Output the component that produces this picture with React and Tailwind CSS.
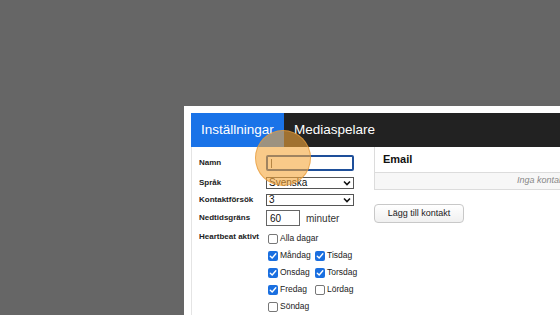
import React from 'react'

function Box({ checked }) {
  return checked ? (
    <span className="w-[10px] h-[10px] rounded-[2px] bg-[#1a6fe0] flex items-center justify-center shrink-0">
      <svg width="8" height="8" viewBox="0 0 8 8">
        <path d="M1.3 4.2 L3.2 6 L6.8 1.8" stroke="white" strokeWidth="1.4" fill="none" strokeLinecap="round" strokeLinejoin="round" />
      </svg>
    </span>
  ) : (
    <span className="w-[10px] h-[10px] rounded-[2px] border border-[#777] bg-white shrink-0" />
  )
}

function Day({ label, checked }) {
  return (
    <div className="flex items-center gap-[2px] h-[17px]">
      <Box checked={checked} />
      <span className="text-[8.5px] text-[#222]">{label}</span>
    </div>
  )
}

function Select({ value }) {
  return (
    <div className="w-[88px] h-[12px] border border-[#555] flex items-center justify-between px-[2px] bg-white">
      <span className="text-[10px] leading-none text-[#111]">{value}</span>
      <svg width="8" height="6" viewBox="0 0 8 6">
        <path d="M1 1.5 L4 4.5 L7 1.5" stroke="#111" strokeWidth="1.6" fill="none" />
      </svg>
    </div>
  )
}

export default function App() {
  const label = 'w-[67px] text-[8px] font-bold text-[#222] shrink-0'
  return (
    <div className="w-[560px] h-[315px] overflow-hidden bg-[#666666] pt-[106px] pl-[184px] relative font-['Liberation_Sans',Arial,sans-serif]">
      <div className="w-[420px] h-[260px] bg-white pt-[7px] pl-[7px]">
        <div className="h-[34px] bg-[#222222] flex items-stretch">
          <div className="bg-[#1a73e8] w-[93px] flex items-center pl-[10px] text-white text-[13.5px]">Inställningar</div>
          <div className="flex items-center pl-[10px] text-white text-[13.5px]">Mediaspelare</div>
        </div>
        <div className="flex">
          <div className="w-[176px] border-l border-[#e4e4e4] pl-[7px] pt-[8px] h-[200px]">
            <div className="flex items-center h-[16px]">
              <span className={label}>Namn</span>
              <div className="w-[88px] h-[16px] border-2 border-[#1e4f9a] rounded-[2px] bg-white flex items-center pl-[3px]">
                <span className="w-px h-[9px] bg-[#555]" />
              </div>
            </div>
            <div className="flex items-center h-[12px] mt-[6px]">
              <span className={label}>Språk</span>
              <Select value="Svenska" />
            </div>
            <div className="flex items-center h-[12px] mt-[5px]">
              <span className={label}>Kontaktförsök</span>
              <Select value="3" />
            </div>
            <div className="flex items-center h-[16px] mt-[4px]">
              <span className={label}>Nedtidsgräns</span>
              <div className="w-[34px] h-[16px] border border-[#666] flex items-center pl-[3px] text-[10px] text-[#111]">60</div>
              <span className="ml-[6px] text-[10px] text-[#333]">minuter</span>
            </div>
            <div className="flex mt-[4px]">
              <span className={label + ' pt-[1px]'}>Heartbeat aktivt</span>
              <div className="pl-[2px]">
                <Day label="Alla dagar" checked={false} />
                <div className="grid grid-cols-[47px_auto]">
                  <Day label="Måndag" checked />
                  <Day label="Tisdag" checked />
                  <Day label="Onsdag" checked />
                  <Day label="Torsdag" checked />
                  <Day label="Fredag" checked />
                  <Day label="Lördag" checked={false} />
                  <Day label="Söndag" checked={false} />
                </div>
              </div>
            </div>
          </div>
          <div className="ml-[7px] flex-1">
            <div className="w-[209px] border border-t-0 border-[#dcdcdc]">
              <div className="h-[26px] flex items-center pl-[8px] text-[11px] font-bold text-[#111] border-b border-[#dcdcdc]">Email</div>
              <div className="h-[16px] bg-[#f7f7f7] flex items-center justify-end pr-[8px] text-[9px] italic text-[#888] whitespace-nowrap">Inga kontakter</div>
            </div>
            <button className="mt-[14px] w-[90px] h-[19px] border border-[#c8c8c8] rounded-[4px] bg-gradient-to-b from-white to-[#f0f0f0] text-[9px] text-[#222]">Lägg till kontakt</button>
          </div>
        </div>
      </div>
      <div className="absolute left-[255px] top-[130px] w-[56px] h-[56px] rounded-full bg-[#f5a63a]/60 border border-[#e59a3a]/70" />
    </div>
  )
}
